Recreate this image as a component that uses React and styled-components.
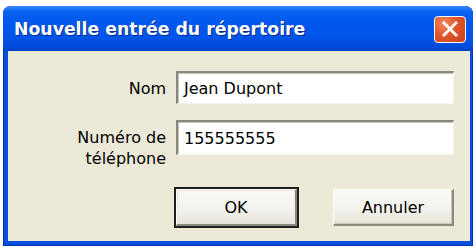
import React from 'react';
import styled, { createGlobalStyle } from 'styled-components';

const GlobalStyle = createGlobalStyle`
  html, body {
    margin: 0;
    padding: 0;
    background: #ffffff;
  }
  body {
    font-family: 'DejaVu Sans', 'Liberation Sans', sans-serif;
  }
`;

const Page = styled.div`
  width: 476px;
  height: 248px;
  padding: 6px 3px 2px 3px;
  box-sizing: border-box;
`;

const Window = styled.div`
  width: 470px;
  height: 240px;
  display: flex;
  flex-direction: column;
  border-radius: 8px 8px 0 0;
  overflow: hidden;
  background: #0a4fdc;
  box-shadow: inset 0 0 0 1px #0031b5;
`;

const TitleBar = styled.div`
  height: 45px;
  flex: none;
  display: flex;
  align-items: center;
  justify-content: space-between;
  padding: 0 7px 0 11px;
  box-sizing: border-box;
  background: linear-gradient(
    180deg,
    #3c8cf6 0%,
    #0a62f0 12%,
    #0058ee 35%,
    #0054e8 70%,
    #004cd8 92%,
    #0042c4 100%
  );
`;

const Title = styled.div`
  color: #ffffff;
  font-weight: bold;
  font-size: 17.3px;
  letter-spacing: 0;
  text-shadow: 1px 1px 0 #0a2a8c;
  padding-top: 1px;
`;

const CloseButton = styled.div`
  width: 32px;
  height: 27px;
  box-sizing: border-box;
  border: 1px solid #ffffff;
  border-radius: 4px;
  background: radial-gradient(circle at 30% 25%, #f08a5c 0%, #e0562a 45%, #c8401a 100%);
  display: flex;
  align-items: center;
  justify-content: center;
  margin-top: 1px;
`;

const Body = styled.div`
  flex: 1;
  margin: 0 3px 5px 5px;
  background: #ece9d8;
  padding: 20px 0 0 0;
  box-sizing: border-box;
  display: grid;
  grid-template-columns: 158px 278px;
  column-gap: 10px;
  row-gap: 16px;
  align-content: start;
`;

const Label = styled.div`
  text-align: right;
  font-size: 16px;
  line-height: 21px;
  color: #000000;
  padding-top: 7px;
`;

const Field = styled.div`
  height: ${(p) => p.$h}px;
  box-sizing: border-box;
  background: #ffffff;
  border-top: 2px solid #8a877e;
  border-left: 2px solid #8a877e;
  border-right: 1px solid #f4f3ee;
  border-bottom: 1px solid #f4f3ee;
  box-shadow: inset 1px 1px 0 #c8c5b8;
  display: flex;
  align-items: center;
  padding-left: 6px;
  font-size: 16px;
  color: #000000;
`;

const ButtonRow = styled.div`
  grid-column: 2;
  display: flex;
  justify-content: space-between;
  margin-top: 4px;
`;

const Button = styled.div`
  width: 121px;
  height: 37px;
  box-sizing: border-box;
  display: flex;
  align-items: center;
  justify-content: center;
  font-size: 16px;
  color: #000000;
  background: linear-gradient(180deg, #fbfaf6 0%, #f2f1ea 60%, #e6e4da 100%);
  border-top: 1px solid #ffffff;
  border-left: 1px solid #ffffff;
  border-right: 2px solid #8c897e;
  border-bottom: 2px solid #8c897e;
  outline: ${(p) => (p.$default ? '2px solid #1e1e1e' : 'none')};
  outline-offset: ${(p) => (p.$default ? '0px' : '0')};
  box-shadow: ${(p) => (p.$default ? 'inset 0 0 0 1px #e8e6dc' : 'inset -1px -1px 0 #c9c6ba')};
`;

export default function App() {
  return (
    <>
      <GlobalStyle />
      <Page>
        <Window>
          <TitleBar>
            <Title>Nouvelle entrée du répertoire</Title>
            <CloseButton>
              <svg width="18" height="16" viewBox="0 0 18 16">
                <path d="M3 2 L15 14 M15 2 L3 14" stroke="#ffffff" strokeWidth="2.8" strokeLinecap="square" />
              </svg>
            </CloseButton>
          </TitleBar>
          <Body>
            <Label>Nom</Label>
            <Field $h={33}>Jean Dupont</Field>
            <Label>
              Numéro de
              <br />
              téléphone
            </Label>
            <Field $h={35}>155555555</Field>
            <ButtonRow>
              <Button $default>OK</Button>
              <Button>Annuler</Button>
            </ButtonRow>
          </Body>
        </Window>
      </Page>
    </>
  );
}
